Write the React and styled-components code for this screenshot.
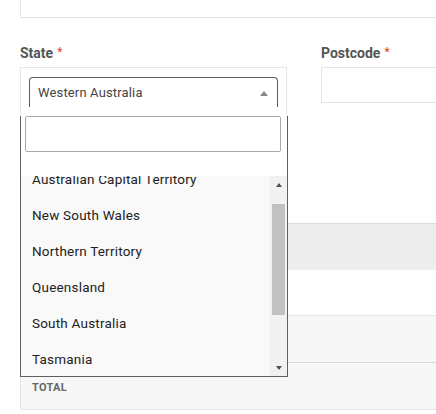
import React from "react";
import styled, { createGlobalStyle } from "styled-components";

const GlobalStyle = createGlobalStyle`
  html, body {
    margin: 0;
    padding: 0;
    background: #fff;
    overflow: hidden;
  }
  body {
    font-family: Roboto, "Liberation Sans", Arial, sans-serif;
    color: #333;
  }
  * { box-sizing: border-box; }
`;

const Page = styled.div`
  width: 608px;
  padding: 0 20px;
  margin-top: -18px;
`;

const TextInput = styled.div`
  height: ${(p) => p.$h || 36}px;
  border: 1px solid #e4e4e4;
  background: #fff;
`;

const FieldGrid = styled.div`
  display: grid;
  grid-template-columns: 267px 267px;
  column-gap: 34px;
  margin-top: 24px;
`;

const Field = styled.div`
  display: flex;
  flex-direction: column;
`;

const Label = styled.label`
  display: block;
  height: 20px;
  line-height: 20px;
  margin-bottom: 5px;
  font-size: 14px;
  font-weight: 700;
  color: #555;
`;

const Required = styled.span`
  color: #e2401c;
  font-size: 12px;
  font-weight: 400;
  margin-left: 4px;
  vertical-align: 2px;
`;

const SelectBox = styled.div`
  position: relative;
  border: 1px solid #e6e6e6;
  padding: 9px 8px;
`;

const SelectHead = styled.div`
  display: flex;
  align-items: center;
  justify-content: space-between;
  height: 30px;
  padding: 0 9px 0 8px;
  border: 1px solid #5f5f5f;
  border-bottom: none;
  border-radius: 4px 4px 0 0;
  font-size: 13px;
  color: #444;
  letter-spacing: 0.15px;
`;

const Caret = styled.span`
  width: 0;
  height: 0;
  border-style: solid;
  border-width: 0 4px 5px 4px;
  border-color: transparent transparent #888 transparent;
  margin-top: 1px;
`;

/* open dropdown panel hanging below the field box */
const Dropdown = styled.div`
  position: absolute;
  top: 100%;
  left: -1px;
  width: 268px;
  background: #fff;
  border: 1px solid #5f5f5f;
  border-top: none;
  z-index: 5;
`;

const SearchWrap = styled.div`
  padding: 0 6px 24px 4px;
`;

const SearchInput = styled.input`
  display: block;
  width: 100%;
  height: 36px;
  border: 1px solid #aaa;
  border-radius: 2px;
  outline: none;
  background: #fff;
`;

const ListArea = styled.div`
  display: flex;
  height: 200px;
  background: #f9f9f9;
`;

const ListViewport = styled.div`
  flex: 1;
  overflow: hidden;
`;

const OptionList = styled.ul`
  list-style: none;
  margin: -15px 0 0;
  padding: 0;
`;

const Option = styled.li`
  height: 36px;
  line-height: 36px;
  padding-left: 11px;
  font-size: 13.5px;
  color: #222;
  letter-spacing: 0.2px;
  white-space: nowrap;
`;

const Scrollbar = styled.div`
  width: 17px;
  display: flex;
  flex-direction: column;
  background: #f1f1f1;
`;

const ScrollButton = styled.div`
  height: 17px;
  display: flex;
  align-items: center;
  justify-content: center;
  &::before {
    content: "";
    width: 0;
    height: 0;
    border-style: solid;
    border-width: ${(p) => (p.$down ? "4px 3.5px 0 3.5px" : "0 3.5px 4px 3.5px")};
    border-color: ${(p) =>
      p.$down
        ? "#505050 transparent transparent transparent"
        : "transparent transparent #505050 transparent"};
  }
`;

const ScrollTrack = styled.div`
  flex: 1;
  padding: 11px 2px 0;
`;

const ScrollThumb = styled.div`
  height: 111px;
  background: #c1c1c1;
`;

const Summary = styled.div`
  margin-top: 106px;
  border-left: 1px solid #e6e6e6;
  border-bottom: 1px solid #e6e6e6;
`;

const SummaryRow = styled.div`
  height: ${(p) => p.$h}px;
  background: ${(p) => p.$bg};
  border-top: ${(p) => (p.$line ? `1px solid ${p.$line}` : "none")};
  padding: 13px 11px 0;
`;

const SummaryLabel = styled.span`
  font-size: 11px;
  font-weight: 700;
  color: #666;
  letter-spacing: 0.3px;
  text-transform: uppercase;
`;

const states = [
  "Australian Capital Territory",
  "New South Wales",
  "Northern Territory",
  "Queensland",
  "South Australia",
  "Tasmania",
  "Victoria",
  "Western Australia",
];

export default function App() {
  return (
    <>
      <GlobalStyle />
      <Page>
        <TextInput />
        <FieldGrid>
          <Field>
            <Label>
              State<Required>*</Required>
            </Label>
            <SelectBox>
              <SelectHead>
                <span>Western Australia</span>
                <Caret />
              </SelectHead>
              <Dropdown>
                <SearchWrap>
                  <SearchInput type="text" aria-label="Search states" />
                </SearchWrap>
                <ListArea>
                  <ListViewport>
                    <OptionList>
                      {states.map((s) => (
                        <Option key={s}>{s}</Option>
                      ))}
                    </OptionList>
                  </ListViewport>
                  <Scrollbar>
                    <ScrollButton />
                    <ScrollTrack>
                      <ScrollThumb />
                    </ScrollTrack>
                    <ScrollButton $down />
                  </Scrollbar>
                </ListArea>
              </Dropdown>
            </SelectBox>
          </Field>
          <Field>
            <Label>
              Postcode<Required>*</Required>
            </Label>
            <TextInput />
          </Field>
        </FieldGrid>
        <Summary>
          <SummaryRow $h={47} $bg="#ededed" $line="#dcdcdc" />
          <SummaryRow $h={45} $bg="#fff" />
          <SummaryRow $h={47} $bg="#f7f7f7" $line="#e6e6e6" />
          <SummaryRow $h={47} $bg="#f7f7f7" $line="#dadada">
            <SummaryLabel>Total</SummaryLabel>
          </SummaryRow>
        </Summary>
      </Page>
    </>
  );
}
